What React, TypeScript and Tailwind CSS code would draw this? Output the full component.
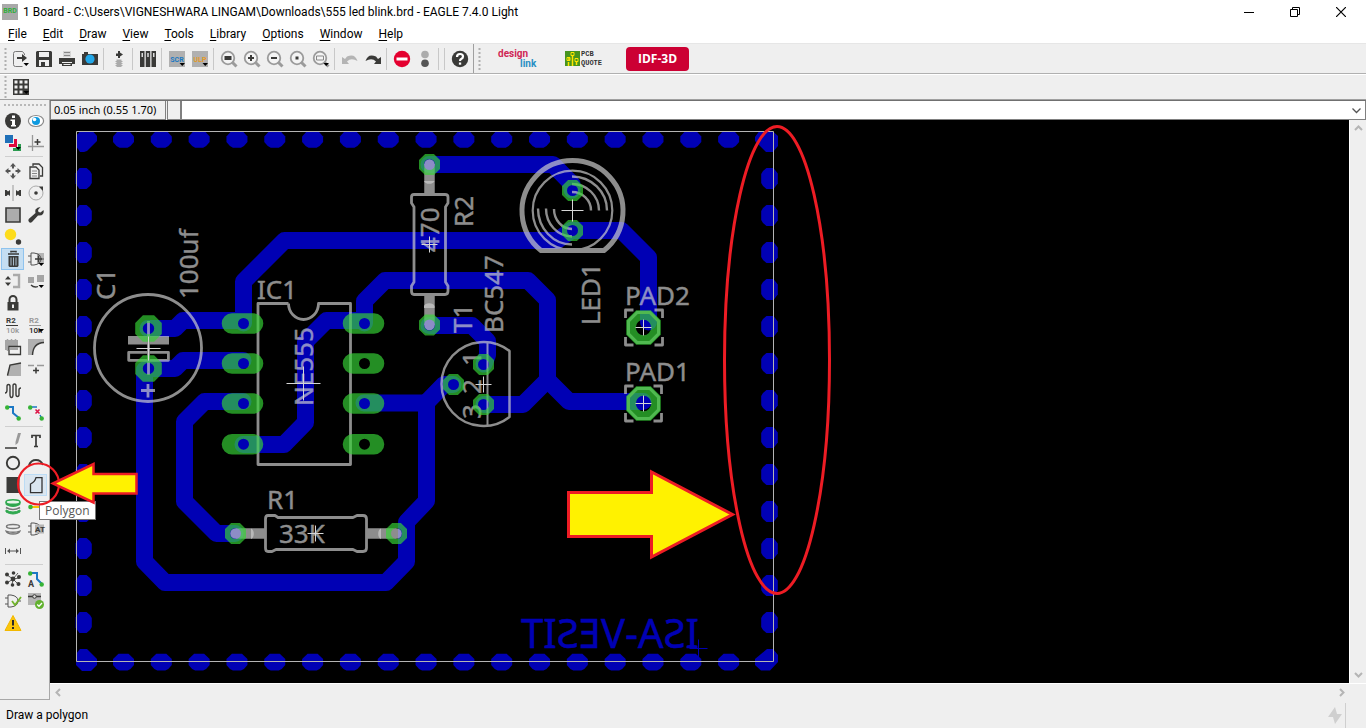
import { useState, type ReactNode } from "react";

type Tool = { label: string; art: ReactNode };

const DARK = "#3a3a38";
const MID = "#9b9b9b";

const MENUS = ["File", "Edit", "Draw", "View", "Tools", "Library", "Options", "Window", "Help"];

const caret = <path d="M10.500 12h5.500l-2.750 3z" fill="#000" />;

function Art({ children, size = 16 }: { children: ReactNode; size?: number }) {
  return (
    <svg width={size} height={size} viewBox="0 0 16 16" fill="none" className="block shrink-0 overflow-visible" aria-hidden="true">
      {children}
    </svg>
  );
}

function Lens({ children }: { children?: ReactNode }) {
  return (
    <>
      <path d="M11 11l4.500 4.500" stroke={MID} strokeWidth="3" />
      <circle cx="7" cy="7" r="6.300" fill="#f4f4f4" stroke={MID} strokeWidth="1.800" />
      {children}
    </>
  );
}

const FILE_TOOLS: Tool[][] = [
  [
    {
      label: "Open",
      art: (
        <>
          <path d="M11.500 4V3L9.500 .500H2.500Q.500 .500 .500 2.500v11q0 2 2 2h7" stroke="#777" />
          <path d="M4 7h6" stroke={DARK} strokeWidth="2" />
          <path d="M9 3l5 4-5 4z" fill={DARK} />
          {caret}
        </>
      ),
    },
    {
      label: "Save",
      art: (
        <>
          <path d="M1 0h14l1 1v15H0V1z" fill={DARK} />
          <path d="M3 1h10v5H3zM3 9h10v6H3z" fill="#efefef" />
          <path d="M5 11h4v4H5z" fill={DARK} />
        </>
      ),
    },
    {
      label: "Print",
      art: (
        <>
          <path d="M4 0h8v6H4z" fill="#d5d5d5" />
          <path d="M5 1.500h6M5 4.500h6" stroke="#888" />
          <path d="M0 7h16v6h-3v-2H3v2H0z" fill={DARK} />
          <path d="M3 12h10v3H3z" fill={DARK} />
          <path d="M4.500 13.500h7" stroke="#eee" />
        </>
      ),
    },
    {
      label: "CAM Processor",
      art: (
        <>
          <path d="M2 1h4v2h10v11H0V3h2z" fill={DARK} />
          <circle cx="8" cy="8" r="4.600" fill="#22a7e8" />
        </>
      ),
    },
  ],
  [
    {
      label: "Schematic",
      art: (
        <>
          <path d="M7 0h2v1.500l3 2-3 2V7H7V5H5V2.500h2z" fill={DARK} />
          <path d="M5.500 8.500h5V16h-5z" fill="#aaa" />
          <path d="M4.500 10.500h7M4.500 12.500h7M4.500 14.500h7" stroke="#aaa" />
        </>
      ),
    },
  ],
  [
    {
      label: "Use library",
      art: (
        <>
          <path d="M0 0h4.500v16H0zM5.750 0h4.500v16h-4.500zM11.500 0H16v16h-4.500z" fill={DARK} />
          <path d="M1.500 2h1.500v4H1.500zM7.250 2h1.500v4h-1.500zM13 2h1.500v4H13z" fill="#ddd" />
        </>
      ),
    },
  ],
  [
    {
      label: "Execute script",
      art: (
        <>
          <path d="M0 0h16v16H0z" fill="#b0b0b0" />
          <text x="8" y="11" fontSize="7" fontWeight="700" textAnchor="middle" fill="#1b78c2" fontFamily="Roboto">SCR</text>
          {caret}
        </>
      ),
    },
    {
      label: "Run ULP",
      art: (
        <>
          <path d="M0 0h16v16H0z" fill="#b0b0b0" />
          <text x="8" y="11" fontSize="7" fontWeight="700" textAnchor="middle" fill="#e59a24" fontFamily="Roboto">ULP</text>
          {caret}
        </>
      ),
    },
  ],
  [
    { label: "Zoom to fit", art: <Lens><path d="M3.500 5h7v4h-7z" fill={DARK} /></Lens> },
    { label: "Zoom in", art: <Lens><path d="M7 4v6M4 7h6" stroke={DARK} strokeWidth="2" /></Lens> },
    { label: "Zoom out", art: <Lens><path d="M4 7h6" stroke={DARK} strokeWidth="2" /></Lens> },
    { label: "Redraw", art: <Lens><path d="M5.500 5.500h3v3h-3z" fill={DARK} /></Lens> },
    { label: "Zoom select", art: <><Lens><path d="M3.500 5h7v4h-7z" stroke="#888" /></Lens>{caret}</> },
  ],
  [
    { label: "Undo", art: <path d="M0 6v7h7L5 10.500q4-4 10.500-.500Q13 2 5 5.500L3 8z" fill="#b4b4b4" /> },
    { label: "Redo", art: <path d="M16 6v7H9l2-2.500Q7 6.500 .500 10 3 2 11 5.500L13 8z" fill={DARK} /> },
  ],
  [
    {
      label: "Stop",
      art: (
        <>
          <circle cx="8" cy="8" r="8.200" fill="#e4002f" />
          <path d="M2.500 6.500h11v3h-11z" fill="#fff" />
        </>
      ),
    },
    {
      label: "Go",
      art: (
        <>
          <circle cx="8" cy="3.500" r="3.800" fill="#acacac" />
          <circle cx="8" cy="12.200" r="3.800" fill="#555" />
        </>
      ),
    },
  ],
  [],
  [
    {
      label: "Help",
      art: (
        <>
          <circle cx="8" cy="8" r="8.200" fill={DARK} />
          <path d="M5 6q0-3 3-3t3 2.500Q11 7 9.500 7.800 8 8.500 8 10" stroke="#fff" strokeWidth="2.200" />
          <path d="M6.900 11.500h2.300v2.200H6.900z" fill="#fff" />
        </>
      ),
    },
  ],
];

const nameValue = (top: string, bottom: string) => (
  <g fontFamily="Roboto" fontSize="8" fontWeight="700">
    <text x="1" y="6" fill={top}>R2</text>
    <path d="M1 8.500h12" stroke={top} />
    <text x="1" y="16" fontWeight="500" fill={bottom}>10k</text>
  </g>
);

const gate = <path d="M3 2h3q7 1 7 6t-7 6H3zM0 5h3M0 11h3M13 8h3" stroke="#555" />;

const EDIT_TOOLS: Tool[][] = [
  [
    {
      label: "Info",
      art: (
        <>
          <circle cx="8" cy="8" r="8" fill={DARK} />
          <path d="M7 2.500h3v2.500H7zM5.500 6.500H10V12h1v1.500H6V12h1V8H5.500z" fill="#fff" />
        </>
      ),
    },
    {
      label: "Show",
      art: (
        <>
          <ellipse cx="8" cy="8" rx="7.600" ry="5.500" fill="#fff" stroke="#8a8a8a" strokeWidth="1.200" />
          <circle cx="8" cy="8" r="4" fill="#0e9ae0" />
          <circle cx="6.500" cy="6.500" r="1.800" fill="#fff" />
        </>
      ),
    },
    {
      label: "Display",
      art: (
        <>
          <path d="M0 0h8v8H0z" fill="#1f70b8" />
          <path d="M9 4h3v8H4V9h5z" fill="#e0093f" />
          <path d="M13 9h3v7H8v-3h5z" fill="#2b9b50" />
          {caret}
        </>
      ),
    },
    {
      label: "Mark",
      art: (
        <>
          <path d="M4.500 0v16M0 11.500h16" stroke="#999" strokeWidth="1.300" />
          <path d="M9.500 4v6M6.500 7h6" stroke={DARK} strokeWidth="1.500" />
        </>
      ),
    },
  ],
  [
    {
      label: "Move",
      art: <path d="M8 0l3 3.500H9v2H7v-2H5zM8 16l3-3.500H9v-2H7v2H5zM0 8l3.500-3v2h2v2h-2v2zM16 8l-3.500-3v2h-2v2h2v2z" fill="#555" />,
    },
    {
      label: "Copy",
      art: (
        <>
          <path d="M5 3V1h6l3.500 3.500V13H12" stroke={DARK} strokeWidth="1.300" />
          <path d="M2 4h6l3 3v8.500H2z" fill="#efefef" stroke={DARK} strokeWidth="1.300" />
          <path d="M4 8h5M4 10.500h5M4 13h5" stroke="#888" />
        </>
      ),
    },
    {
      label: "Mirror",
      art: (
        <>
          <path d="M8 0v16" stroke="#999" />
          <path d="M0 5h1.500L3 6.500 5 5v6L3 9.500 1.500 11H0zM16 5h-1.500L13 6.500 11 5v6l2-1.500 1.500 1.500H16z" fill={DARK} />
        </>
      ),
    },
    {
      label: "Rotate",
      art: (
        <>
          <circle cx="8" cy="8" r="7" stroke="#aaa" />
          <circle cx="8" cy="8" r="1.800" fill={DARK} />
          <path d="M11 1.500h4V6z" fill={DARK} />
        </>
      ),
    },
    { label: "Group", art: <path d="M1 1h14v14H1z" fill="#acacac" stroke={DARK} strokeWidth="1.600" /> },
    {
      label: "Change",
      art: <path d="M15.500 3l-3 2.500-2-.500-.500-2L12.500 0Q9 0 7.500 2.500 7 4 7.500 6L.700 12q-1 2 .500 3.300 1.500 1 2.800-.300L10 8.500q3.500.500 5-1.500 1.300-2 .500-4z" fill={DARK} />,
    },
    {
      label: "Paste",
      art: (
        <>
          <circle cx="5.500" cy="5.500" r="5.700" fill="#fddc1c" />
          <circle cx="13.500" cy="13" r="2.700" fill={DARK} />
        </>
      ),
    },
    { label: "", art: null },
    {
      label: "Delete",
      art: (
        <>
          <path d="M6 1.500V.500h5v1M3 3h11" stroke={DARK} strokeWidth="1.600" />
          <path d="M3.500 5h10v10l-1 1h-8l-1-1z" fill={DARK} />
          <path d="M6 6.500v8M8.500 6.500v8M11 6.500v8" stroke="#a9bccb" />
        </>
      ),
    },
    {
      label: "Add",
      art: (
        <>
          <path d="M9 2h7v11H9z" fill="#b5b5b5" />
          {gate}
          <path d="M10.500 4.500v7M7 8h7" stroke={DARK} strokeWidth="1.500" />
          {caret}
        </>
      ),
    },
    {
      label: "Pinswap",
      art: (
        <>
          <path d="M0 6.500L3 3l3 3.500zM0 9.500L3 13l3-3.500z" fill={DARK} />
          <path d="M8 2h6v12H8" stroke="#aaa" strokeWidth="2.400" />
        </>
      ),
    },
    {
      label: "Replace",
      art: (
        <>
          <path d="M0 4h6v6H0zM9 2h7v7H9z" fill="#a5a5a5" />
          <path d="M3 12q3 3 7 1.500" stroke={DARK} strokeWidth="1.300" />
          {caret}
        </>
      ),
    },
    {
      label: "Lock",
      art: (
        <>
          <path d="M4.500 8V4.500a3.500 3.500 0 017 0V8" stroke={DARK} strokeWidth="2" />
          <path d="M2.500 7h11v8.500h-11z" fill={DARK} />
          <path d="M8 9.500v3.500" stroke="#fff" strokeWidth="1.800" />
        </>
      ),
    },
    { label: "", art: null },
    { label: "Name", art: nameValue(DARK, "#999") },
    { label: "Value", art: <>{nameValue("#999", "#222")}{caret}</> },
    {
      label: "Smash",
      art: (
        <>
          <path d="M0 1h13v10H0z" fill="#a5a5a5" />
          <path d="M2.500 0v2M6.500 0v2M10.500 0v2M2.500 10v2" stroke="#a5a5a5" strokeWidth="1.500" />
          <path d="M4 7.500h11.500v8H4z" fill="#efefef" stroke={DARK} strokeWidth="1.300" />
          <path d="M4.500 8h8.500v3H4.500z" fill="#a5a5a5" />
        </>
      ),
    },
    {
      label: "Miter",
      art: (
        <>
          <path d="M0 0h16v4Q5 4 4 16H0z" fill="#b0b0b0" />
          <path d="M16 3.500Q5 4 4.500 16" stroke={DARK} strokeWidth="1.400" />
        </>
      ),
    },
    {
      label: "Split",
      art: (
        <>
          <path d="M2 15L5 4l11-2v13z" fill="#b0b0b0" />
          <path d="M2.500 14.500L5 4l11-2" stroke={DARK} strokeWidth="1.400" />
        </>
      ),
    },
    {
      label: "Optimize",
      art: (
        <>
          <path d="M0 4.500h6M9 4.500h7" stroke="#999" strokeWidth="1.300" />
          <path d="M8 6.500v6M5 9.500h6" stroke={DARK} strokeWidth="1.500" />
        </>
      ),
    },
    {
      label: "Meander",
      art: <path d="M0 10q2 0 2-3V3.500q0-2 1.500-2T5 3.500v8q0 3 1.500 3T8 11.500V3q0-2 1.500-2T11 3v8.500q0 2 1.500 2t1.500-2V7q0-2 2-2" stroke={DARK} strokeWidth="1.400" />,
    },
    { label: "", art: null },
    {
      label: "Route",
      art: (
        <>
          <path d="M2 2h6v6l6 5" stroke="#1c78c5" strokeWidth="2" />
          <circle cx="2.200" cy="2.500" r="2.200" fill="#36b336" />
          <circle cx="13.700" cy="13.500" r="2.200" fill="#36b336" />
        </>
      ),
    },
    {
      label: "Ripup",
      art: (
        <>
          <path d="M2 2h7M12 10l2 4" stroke="#1c78c5" strokeWidth="1.500" />
          <circle cx="2.200" cy="2.500" r="2.200" fill="#36b336" />
          <circle cx="13.700" cy="13.500" r="2.200" fill="#36b336" />
          <path d="M7.500 4.500l4 4M11.500 4.500l-4 4" stroke="#dc1446" strokeWidth="1.600" />
        </>
      ),
    },
  ],
  [
    {
      label: "Wire",
      art: (
        <>
          <path d="M13 0h3l-3 10-2.500 2V9z" fill="#999" />
          <path d="M0 15h12" stroke={DARK} strokeWidth="1.500" />
        </>
      ),
    },
    { label: "Text", art: <path d="M4 5V2.500h8V5M8 2.500v11M6 13.500h4" stroke={DARK} strokeWidth="1.700" /> },
    { label: "Circle", art: <circle cx="8" cy="8" r="6.200" stroke={DARK} strokeWidth="1.900" /> },
    { label: "Arc", art: <path d="M1 10q2-5 7-5t7 5" stroke={DARK} strokeWidth="2" /> },
    { label: "Rect", art: <path d="M1.500 0h13v16h-13z" fill={DARK} /> },
    { label: "Polygon", art: <path d="M2.500 7Q7 5 8 .700h6v15H2.500z" stroke="#333" strokeWidth="1.300" /> },
    {
      label: "Via",
      art: (
        <>
          <path d="M1 3v2.500q7 4 14 0V3zM1 11v2q7 4 14 0v-2q-7 4-14 0z" fill="#2fa84f" stroke="#2fa84f" />
          <ellipse cx="8" cy="3" rx="7" ry="2.300" fill="#e8f5ea" stroke="#2fa84f" strokeWidth="1.600" />
          <path d="M1 8.500q7 4 14 0" stroke="#777" strokeWidth="1.500" />
        </>
      ),
    },
    {
      label: "Signal",
      art: (
        <>
          <path d="M2 8h14" stroke="#f5c400" strokeWidth="2" />
          <circle cx="2.500" cy="8" r="2.300" fill="#36b336" />
        </>
      ),
    },
    {
      label: "Hole",
      art: (
        <>
          <ellipse cx="8" cy="5.500" rx="6.500" ry="2" stroke="#777" strokeWidth="1.500" />
          <path d="M1 10q1 3 7 3t7-3q-7 2.500-14 0z" fill="#ccc" stroke="#777" strokeWidth="1.300" />
        </>
      ),
    },
    {
      label: "Attribute",
      art: (
        <>
          {gate}
          <path d="M7 3.500h9v9H7z" fill="#b5b5b5" />
          <text x="7" y="11" fontSize="8" fontWeight="700" fill={DARK} fontFamily="Roboto">AT</text>
        </>
      ),
    },
    {
      label: "Dimension",
      art: (
        <>
          <path d="M.500 5v6M15.500 5v6M3 8h10" stroke="#555" />
          <path d="M2 8l3-2.500v5zM14 8l-3-2.500v5z" fill="#555" />
        </>
      ),
    },
    { label: "", art: null },
  ],
  [
    {
      label: "Ratsnest",
      art: (
        <>
          <path d="M2 4l6 4 5-6M8 8l6-1M8 8l-6 4M8 8l-1 6M8 8l5 5" stroke={DARK} strokeWidth=".800" />
          <g fill={DARK}>
            <circle cx="2" cy="3.500" r="2" />
            <circle cx="8" cy="8" r="2.400" />
            <circle cx="8.500" cy="2" r="1.800" />
            <circle cx="14" cy="6" r="2" />
            <circle cx="2" cy="11.500" r="2" />
            <circle cx="7.500" cy="14" r="1.800" />
            <circle cx="13.500" cy="13" r="2" />
          </g>
        </>
      ),
    },
    {
      label: "Autorouter",
      art: (
        <>
          <path d="M2 2h7v6l5 5" stroke="#1c78c5" strokeWidth="2" />
          <circle cx="2.200" cy="2.500" r="2.200" fill="#36b336" />
          <circle cx="13.700" cy="13.500" r="2.200" fill="#36b336" />
          <text x="0" y="16" fontSize="9" fontWeight="700" fill={DARK} fontFamily="Roboto">A</text>
        </>
      ),
    },
    {
      label: "ERC",
      art: (
        <>
          {gate}
          <path d="M7 8l3 4 6-8" stroke="#72b52c" strokeWidth="1.800" />
        </>
      ),
    },
    {
      label: "DRC",
      art: (
        <>
          <path d="M0 0h13v12H0z" fill="#b5b5b5" />
          <path d="M0 3.500h13" stroke={DARK} strokeWidth="1.500" />
          <circle cx="6.500" cy="3.500" r="1.800" fill="#ddd" stroke={DARK} />
          <circle cx="11.500" cy="11.500" r="4.500" fill="#62b22f" />
          <path d="M9.200 11.500l1.800 1.800 3-3.300" stroke="#fff" strokeWidth="1.300" />
        </>
      ),
    },
    {
      label: "Errors",
      art: (
        <>
          <path d="M8 .500L16 15.500H0z" fill="#fbc60d" stroke="#f2b800" strokeLinejoin="round" />
          <path d="M8 5v5.500M8 12v2" stroke="#2b2b2b" strokeWidth="2" />
        </>
      ),
    },
  ],
];

function octagon(cx: number, cy: number, r: number) {
  const k = r * 0.42;
  return `M${cx - k} ${cy - r}H${cx + k}L${cx + r} ${cy - k}V${cy + k}L${cx + k} ${cy + r}H${cx - k}L${cx - r} ${cy + k}V${cy - k}Z`;
}

function hole(cx: number, cy: number, r: number) {
  return `M${cx - r} ${cy}a${r} ${r} 0 1 0 ${2 * r} 0a${r} ${r} 0 1 0 ${-2 * r} 0Z`;
}

function cross(cx: number, cy: number, s: number) {
  return `M${cx - s} ${cy}h${2 * s}M${cx} ${cy - s}v${2 * s}`;
}

// centre x, centre y, outer radius, drill radius
const ROUND_PADS = [
  [148.5, 328.5, 13.3, 5.7],
  [148.5, 368.5, 13.3, 5.7],
  [429.5, 164.5, 10.5, 5.5],
  [429.5, 325, 10.5, 5.5],
  [572.5, 190.5, 10.5, 5.5],
  [572.5, 230.5, 10.5, 5.5],
  [483.5, 364.5, 10.5, 5.5],
  [453.5, 384.5, 10.5, 5.5],
  [483.5, 404.5, 10.5, 5.5],
  [235.5, 533.5, 10.5, 5.5],
  [396.5, 533.5, 10.5, 5.5],
  [643.5, 327.5, 17.3, 7.7],
  [643.5, 403.5, 17.3, 7.7],
];

const IC_PADS = [242.5, 363.5].flatMap((x) => [323.5, 363.5, 403.5, 444.2].map((y) => [x, y]));

const TRACES = [
  "M429 164.500H553L572 184V190",
  "M243.500 323V281.500L284.500 240.500H557L572 230",
  "M572 230.500H621.500L648.500 257.500V322",
  "M364.500 323V301L385 280.500H528L547.500 300V380L523 404.500H484",
  "M547.500 380L569 401.500H643",
  "M429 325.500H472L487.500 341V355L484 364",
  "M453 384.500H444L426.500 402.500",
  "M364 403H426.500V501L406.500 522V561.500L386 582.500H165L144.500 561.500V370",
  "M243 401.500H204.500L184.500 421.500V501.500L216.500 533.500H235",
  "M243 444.500H284L305.500 422.500V341.500L326.500 320.500H364",
  "M148 328.500H175L183 320.500H243",
  "M148 368.500H175L183 360.500H243",
];

const LABELS = [
  { t: "C1", x: 115, y: 300, r: -90 },
  { t: "100uf", x: 198, y: 299, r: -90 },
  { t: "IC1", x: 257, y: 299, r: 0 },
  { t: "NE555", x: 313, y: 406, r: -90 },
  { t: "470", x: 439, y: 252, r: -90 },
  { t: "R2", x: 473, y: 227, r: -90 },
  { t: "T1", x: 472, y: 333, r: -90 },
  { t: "BC547", x: 503, y: 333, r: -90 },
  { t: "LED1", x: 600, y: 325, r: -90 },
  { t: "1", x: 481, y: 366, r: -90 },
  { t: "2", x: 481, y: 394, r: -90 },
  { t: "3", x: 481, y: 419, r: -90 },
  { t: "PAD2", x: 625, y: 305, r: 0 },
  { t: "PAD1", x: 625, y: 381, r: 0 },
  { t: "R1", x: 267, y: 509, r: 0 },
  { t: "33K", x: 279, y: 543, r: 0 },
];

const DASH_X = Array.from({ length: 17 }, (_, i) => 123.5 + i * 37.82);
const DASH_Y = Array.from({ length: 13 }, (_, i) => 178.5 + i * 37);

function brackets(x1: number, y1: number, x2: number, y2: number) {
  return `M${x1} ${y1 + 8}V${y1}H${x1 + 8}M${x2 - 8} ${y1}H${x2}V${y1 + 8}M${x2} ${y2 - 8}V${y2}H${x2 - 8}M${x1 + 8} ${y2}H${x1}V${y2 - 8}`;
}

function Board() {
  return (
    <svg className="block h-full w-full" role="img" aria-label="Board layout">
      <g transform="translate(-50 -120)" fill="none">
        <g fill="#0000b4">
          {DASH_X.map((x) => (
            <g key={x}>
              <path transform={`translate(${x} 139.500)`} d="M-10.500-3L-6-8H6L10.500-3V2.500L7 6.500L4 8.200H-4L-7 6.500L-10.500 2.500Z" />
              <path transform={`translate(${x} 662)`} d="M-10.500-3L-5-8.300H5L10.500-3V3L7 7L4 8.500H-4L-7 7L-10.500 3Z" />
            </g>
          ))}
          {DASH_Y.map((y) => (
            <g key={y}>
              <path transform={`translate(83.500 ${y})`} d="M-4-10.500H3L6.500-7.500L8.300-4.500V4.500L6.500 7.500L3 10.500H-4L-8 5V-5Z" />
              <path transform={`translate(769.500 ${y})`} d="M-3-10.500H4L8.300-5V5L4 10.500H-3L-6.500 7.500L-8.300 4.500V-4.500L-6.500-7.500Z" />
            </g>
          ))}
          <path d="M76 136L80 131.500H93L97 136V141L87 151L84 152H80L76 146Z" />
          <path d="M76 654L80 649H87L97 659V665L91 671H82L76 665Z" />
          <path d="M755 137L759 131.500H773L778 136V146L773 152H766L755 141Z" />
          <path d="M755 659L767 649H773L778 655V662L770 670.500H761L755 665Z" />
        </g>

        <g stroke="#0000b4" strokeWidth="17" strokeLinejoin="round" strokeLinecap="round">
          {TRACES.map((d) => <path key={d} d={d} />)}
        </g>

        <path d="M76.500 131.500H773.500V661.500H76.500Z" stroke="#b4b4b4" />

        <g opacity=".68" stroke="#d0d0d0" strokeWidth="2.800" strokeLinejoin="round">
          <circle cx="148" cy="348" r="53.500" />
          <path d="M128 336h41v8.500h-41z" fill="#d0d0d0" stroke="none" />
          <path d="M128.700 352.300h39.700v8h-39.700z" />
          <path d="M148.500 321v54M148 384v13.500M141 390.500h14" />
          <path d="M288.500 303.500H258V464.500H350.500V303.500H318.500A15 16 0 0 1 288.500 303.500" />
          <path d="M414 194.500H445Q448 194.500 448 197V203L445.500 207V282L448 286V291Q448 294.500 445 294.500H414Q411.500 294.500 411.500 291V286L414 282V207L411.500 203V197Q411.500 194.500 414 194.500Z" />
          <path d="M429.500 164V194M429.500 295V325M236 533.500H265M367 533.500H396" strokeWidth="10.500" />
          <path d="M268 515.500H275L278 517.500H353L357 515.500H363Q366.500 515.500 366.500 519V548Q366.500 551.500 363 551.500H357L353 549.500H276L272 551.500H268Q265.500 551.500 265.500 548V519Q265.500 515.500 268 515.500Z" />
          <path
            d={hole(429.5, 164.5, 5.3) + hole(429.5, 325, 5.3) + hole(235.5, 533.5, 5.3) + hole(396.5, 533.5, 5.3)}
            fill="#d0d0d0"
            stroke="none"
          />
          <path d="M541 250.500A50.500 50.500 0 1 1 604 250.500Z" strokeWidth="5" />
          <circle cx="572.500" cy="210.500" r="39.800" strokeWidth="2.200" />
          <g strokeWidth="2.400">
            <path d="M572 192a19 18.500 0 0 1 19 18.500M572 184a27 26.500 0 0 1 27 26.500M572 176.500a35 34 0 0 1 35 34" />
            <path d="M572 229a18 20 0 0 1-18-20M572 236.500a26 28 0 0 1-26-28M572 244.500a34 36 0 0 1-34-36" />
          </g>
          <path d="M509.500 351A42 42 0 1 0 509.500 417Z" strokeWidth="2.500" />
          <path d="M487.500 343V425" strokeWidth="2" />
          <path d={brackets(625.5, 310, 662.5, 345)} />
          <path d={brackets(625.5, 386, 661.5, 421)} />
          <g fill="#d0d0d0" strokeWidth=".400" fontFamily="Noto Sans, sans-serif" fontSize="26">
            {LABELS.map((l) => (
              <text key={l.t} transform={`translate(${l.x} ${l.y}) rotate(${l.r})`}>{l.t}</text>
            ))}
          </g>
        </g>

        <g fill="#b9b9b9">
          <path d="M424 181h10.500a5.500 4 0 0 1-10.500 0zM424 308v-2a5.500 4 0 0 1 10.500 0v2z" />
          <path d="M251 528.500v10.500a4 5.500 0 0 0 0-10.500zM381 528.500v10.500a4 5.500 0 0 1 0-10.500z" />
        </g>

        <g fill="#36d436" fillOpacity=".67" fillRule="evenodd">
          {IC_PADS.map(([x, y]) => (
            <path
              key={`${x}-${y}`}
              d={`M${x - 10.5} ${y - 10.3}h21a10.3 10.3 0 0 1 0 20.6h-21a10.3 10.3 0 0 1 0-20.6Z${hole(x + 1, y, 5.5)}`}
            />
          ))}
          {ROUND_PADS.map(([x, y, r, d]) => <path key={`${x}-${y}`} d={octagon(x, y, r) + hole(x, y, d)} />)}
        </g>
        <g stroke="#50b950" strokeWidth="3">
          <path d={octagon(643.5, 327.5, 15)} />
          <path d={octagon(643.5, 403.5, 15)} />
        </g>

        <path
          stroke="#d6d6d6"
          d={[
            cross(148.5, 348.5, 12),
            cross(303.5, 383.5, 17),
            cross(429.5, 244.5, 8),
            cross(315.5, 533.5, 8),
            cross(572.5, 210.5, 11),
            cross(483.5, 384.5, 8),
            cross(643.5, 327.5, 8),
            cross(643.5, 403.5, 8),
          ].join("")}
        />

        <text transform="translate(699 648) scale(-1 1)" fill="#0000b4" stroke="#0000b4" strokeWidth=".500" fontFamily="Noto Sans, sans-serif" fontSize="40">ISA-VESIT</text>
        <path d={cross(698.5, 648.5, 9)} stroke="#0000b4" />

        <g stroke="#ed1c24" strokeWidth="3">
          <path d="M568.500 492.500H651.500V472L732.500 514.500L651.500 557V536.500H568.500Z" fill="#fff200" />
          <ellipse cx="777" cy="360" rx="52.500" ry="233.500" />
        </g>
      </g>
    </svg>
  );
}

function Grip() {
  return (
    <svg width="4" height="26" className="ml-1 shrink-0" aria-hidden="true">
      <path d="M1.500 2v23" stroke="#b0b0b0" strokeWidth="2" strokeDasharray="2 2" />
    </svg>
  );
}

function Chevron({ d, dark }: { d: string; dark?: boolean }) {
  return (
    <svg width="9" height="9" viewBox="0 0 9 9" fill="none" stroke={dark ? "#555" : "#b5b5b5"} strokeWidth={dark ? 1.3 : 2} aria-hidden="true">
      <path d={d} />
    </svg>
  );
}

export default function App() {
  const [active, setActive] = useState("Delete");
  const [command, setCommand] = useState("");

  return (
    <div className="flex h-screen flex-col overflow-hidden bg-[#efefef] font-[Roboto,'Open_Sans',sans-serif] text-xs text-black">
      <header className="bg-white">
        <div className="flex h-[23px] items-center">
          <div className="ml-0.5 flex h-4 w-4 items-center justify-center bg-[#a9a9a9] text-[7px] font-bold text-[#2fae3b]">BRD</div>
          <h1 className="ml-[5px] grow truncate">1 Board - C:\Users\VIGNESHWARA LINGAM\Downloads\555 led blink.brd - EAGLE 7.4.0 Light</h1>
          <div className="mr-0.5 flex">
            <button aria-label="Minimize" className="flex h-5 w-[46px] items-center justify-center">
              <svg width="10" height="10" stroke="#000"><path d="M0 5.500h10" /></svg>
            </button>
            <button aria-label="Restore" className="flex h-5 w-[46px] items-center justify-center">
              <svg width="10" height="10" fill="none" stroke="#000"><path d="M2.500 2.500v-2h7v7h-2M.500 2.500h7v7h-7z" /></svg>
            </button>
            <button aria-label="Close" className="flex h-5 w-[46px] items-center justify-center">
              <svg width="10" height="10" stroke="#000" strokeWidth="1.200"><path d="M0 0l10 10M10 0L0 10" /></svg>
            </button>
          </div>
        </div>
        <nav className="flex h-5 items-end gap-4 pb-px pl-2">
          {MENUS.map((m) => (
            <button key={m}>
              <span className="underline underline-offset-2">{m[0]}</span>
              {m.slice(1)}
            </button>
          ))}
        </nav>
      </header>

      <div className="flex h-[31px] shrink-0 items-center border-t border-b border-t-[#e6e6e6] border-b-[#b0b0b0]">
        <div className="flex w-[9px]"><Grip /></div>
        {FILE_TOOLS.map((group, i) => (
          <div key={i} className="flex items-center">
            {i > 0 && <div className="mx-[2px] h-[22px] w-[2px] border-l border-[#c8c8c8]" />}
            {group.map((t) => (
              <button key={t.label} aria-label={t.label} className="flex h-[22px] w-[23px] items-center justify-center">
                <Art>{t.art}</Art>
              </button>
            ))}
          </div>
        ))}
        <div className="ml-0.5 h-full border-l border-[#a0a0a0]" />
        <Grip />
        <button aria-label="Design link" className="ml-4 flex">
          <svg width="42" height="22" className="overflow-visible" fontFamily="Roboto, sans-serif" fontWeight="700" fontSize="10" aria-hidden="true">
            <text x="0" y="9" fill="#cf2755">design</text>
            <text x="22" y="19" fill="#2a8fc4">link</text>
          </svg>
        </button>
        <button aria-label="PCB quote" className="ml-[25px] flex items-center gap-px">
          <svg width="15" height="15" fill="none" aria-hidden="true">
            <path d="M0 0h15v15H0z" fill="#46941f" />
            <path d="M7.500 15V4M3.500 15v-4M4 9V7M11.500 14v-4" stroke="#ffe600" strokeWidth="1.500" />
            <path d="M6 1.500h3v3H6zM2 6.500h3v3H2zM10 7.500h3v3h-3z" stroke="#ffe600" />
          </svg>
          <span className="text-left font-['Liberation_Mono',monospace] text-[7px] leading-[9px] font-bold text-[#333]">PCB<br />QUOTE</span>
        </button>
        <button className="ml-6 h-6 w-[63px] rounded bg-[#cc0033] font-['Open_Sans',sans-serif] font-bold text-white">IDF-3D</button>
      </div>

      <div className="flex h-[26px] shrink-0 items-center border-t border-b border-t-white border-b-[#a0a0a0]">
        <div className="flex w-[9px]"><Grip /></div>
        <button aria-label="Grid" className="flex h-[22px] w-[23px] items-center justify-center">
          <Art>
            <path d="M0 0h16v16H0z" fill={DARK} />
            <path d="M1.500 1.500h3v3h-3zM6.500 1.500h3v3h-3zM11.500 1.500h3v3h-3zM1.500 6.500h3v3h-3zM6.500 6.500h3v3h-3zM11.500 6.500h3v3h-3zM1.500 11.500h3v3h-3zM6.500 11.500h3v3h-3z" fill="#efefef" />
            {caret}
          </Art>
        </button>
      </div>

      <main className="relative flex min-h-0 grow">
        <aside className="flex w-[50px] shrink-0 flex-col border-r border-b border-[#a8a8a8] pr-0.5 pl-px">
          <svg width="46" height="10" aria-hidden="true">
            <path d="M3 5h42" stroke="#b8b8b8" strokeWidth="2" strokeDasharray="2 2" />
          </svg>
          {EDIT_TOOLS.map((group, i) => (
            <div key={i}>
              {i > 0 && <div className="mx-1 h-1.5 pt-[2px]"><div className="border-t border-[#cfcfcf]" /></div>}
              <div className="grid grid-cols-2">
                {group.map((t, j) =>
                  t.label ? (
                    <button
                      key={j}
                      aria-label={t.label}
                      onClick={() => setActive(t.label)}
                      className={
                        "flex h-[22px] items-center justify-center " +
                        (t.label === active
                          ? "border border-[#8fc3ee] bg-[#c5def2]"
                          : t.label === "Polygon"
                            ? "border border-[#bcdcf5] bg-[#dae6f0]"
                            : "")
                      }
                    >
                      <Art>{t.art}</Art>
                    </button>
                  ) : (
                    <span key={j} />
                  )
                )}
              </div>
            </div>
          ))}
        </aside>

        <section className="flex min-w-0 grow flex-col">
          <div className="flex h-5 shrink-0 border-t border-[#707070]">
            <output className="flex w-[116px] items-center border border-t-0 border-[#808080] pt-px pl-[3px] font-['Noto_Sans',sans-serif] text-[11px] whitespace-nowrap">0.05 inch (0.55 1.70)</output>
            <div className="ml-px w-[14px] border-x border-b border-[#808080]" />
            <input
              aria-label="Command line"
              value={command}
              onChange={(e) => setCommand(e.target.value)}
              className="min-w-0 grow border-b border-l border-[#808080] bg-white px-1 outline-none"
            />
            <button aria-label="Command history" className="flex w-[18px] items-center justify-center border-r border-b border-[#808080] bg-white">
              <Chevron d="M.500 2.500l4 4 4-4" dark />
            </button>
          </div>
          <div className="flex min-h-0 grow">
            <div className="min-w-0 grow bg-black">
              <Board />
            </div>
            <div className="flex w-[17px] shrink-0 flex-col items-center justify-between border-l border-white py-1">
              <button aria-label="Scroll up"><Chevron d="M1 6l3.500-3.500L8 6" /></button>
              <button aria-label="Scroll down"><Chevron d="M1 3l3.500 3.500L8 3" /></button>
            </div>
          </div>
          <div className="flex h-[17px] shrink-0 items-center justify-between border-t border-white pr-5 pl-1">
            <button aria-label="Scroll left"><Chevron d="M6 1L2.500 4.500 6 8" /></button>
            <button aria-label="Scroll right"><Chevron d="M3 1l3.500 3.500L3 8" /></button>
          </div>
        </section>

        <div role="tooltip" className="absolute top-[401px] left-[39px] border border-[#767676] bg-white px-[5px] font-['Open_Sans',sans-serif] leading-[17px] text-[#575757]">Polygon</div>
        <svg className="pointer-events-none absolute top-[360px] left-[14px]" width="126" height="48" fill="none" stroke="#ed1c24" aria-hidden="true">
          <circle cx="24.500" cy="24" r="20.500" strokeWidth="2.200" />
          <path d="M39 23.500L79.500 4V14H122.500V33.500H79.500V42.500Z" fill="#fff200" strokeWidth="2.500" />
        </svg>
      </main>

      <footer className="flex h-7 shrink-0 items-center justify-between pt-0.5 pr-5 pl-1.5">
        <span>Draw a polygon</span>
        <div className="flex items-center gap-1 border-r border-[#cfcfcf] py-1 pr-[3px]">
          <svg width="14" height="17" aria-hidden="true"><path d="M7 0L0 10h5l2 7 7-10H9z" fill="#cfcfcf" /></svg>
        </div>
      </footer>
    </div>
  );
}
